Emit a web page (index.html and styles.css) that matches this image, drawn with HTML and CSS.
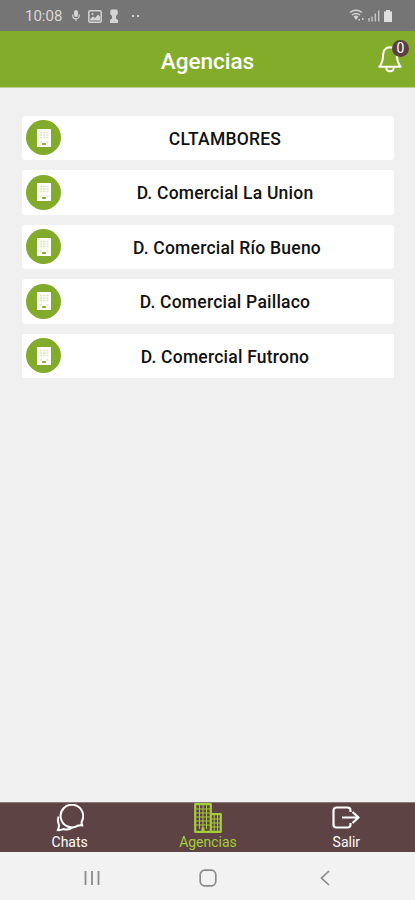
FILE: index.html
```html
<!DOCTYPE html>
<html lang="es">
<head>
  <meta charset="UTF-8">
  <meta name="viewport" content="width=device-width, initial-scale=1.0">
  <title>Agencias</title>
  <link rel="stylesheet" href="styles.css">
</head>
<body>
  <!-- Building icon shared by the list rows -->
  <svg class="defs" width="0" height="0">
    <symbol id="building" viewBox="0 0 14 18">
      <path d="M0 0h14v18H0z" fill="#fff"/>
      <path d="M2.500 3.500h2.500M6 3.500h2.500M9.500 3.500h2M2.500 6h2.500M6 6h2.500M9.500 6h2M2.500 8.500h2.500M6 8.500h2.500M9.500 8.500h2M2.500 13h2.500M9.500 13h2" stroke="#dbe8bf" stroke-width="1.300"/>
      <path d="M5.200 14h3.600v2H5.200z" fill="#82ab2b"/>
    </symbol>
  </svg>

  <div class="status-bar">
    <span class="time">10:08</span>
    <svg class="mic" width="8" height="12" viewBox="0 0 8 12">
      <rect x="2" y="0" width="4" height="7" rx="2" fill="#d4d4d4"/>
      <path d="M.7 4.500v1a3.300 3.300 0 0 0 6.600 0v-1M4 8.800V11" fill="none" stroke="#d4d4d4" stroke-width="1.200"/>
    </svg>
    <svg class="picture" width="14" height="13" viewBox="0 0 14 13">
      <rect x=".8" y=".8" width="12.400" height="11.400" rx="1.500" fill="none" stroke="#d4d4d4" stroke-width="1.500"/>
      <path d="M2 10.500V9l3-2.500 2 1.500 3-3.500 2 2v4z" fill="#d4d4d4"/>
      <circle cx="4.500" cy="4" r="1" fill="#d4d4d4"/>
    </svg>
    <svg class="pawn" width="10" height="14" viewBox="0 0 10 14">
      <path d="M2 .5h6l.8 2v2.500L7 7v2.500l2 1.500v3H1v-3l2-1.500V7L1.200 5V2.500z" fill="#d4d4d4"/>
    </svg>
    <span class="dots"><i></i><i></i></span>
    <svg class="signals" width="44" height="14" viewBox="0 0 44 14">
      <path d="M1 3.500Q7 -1 13 3.500M3 6q4-3 8 0" fill="none" stroke="#d4d4d4" stroke-width="1.400"/>
      <path d="M4.500 7.500Q7 5.500 9.500 7.500L7 11zM9.500 10h1.500v1.500H9.500zM13 9h1.500v2H13z" fill="#d4d4d4"/>
      <path d="M20 9v3.500M23 7.500v5M26.300 4.500v8M29.700 1.500v11" stroke="#c4c4c4" stroke-width="1.500"/>
      <path d="M37 1h4v1.500h2V13h-8V2.500h2z" fill="#dedede"/>
    </svg>
  </div>

  <header class="header">
    <h1>Agencias</h1>
    <div class="bell">
      <svg width="24" height="29" viewBox="0 0 24 29">
        <path d="M12 2.200c-4.500 0-6.900 3.200-6.900 7.500 0 5.300-.6 8.300-3.900 12.100h21.600c-3.300-3.800-3.900-6.800-3.900-12.100 0-4.300-2.400-7.500-6.900-7.500z" fill="none" stroke="#fff" stroke-width="2" stroke-linejoin="round"/>
        <path d="M8.300 22.500c0 5 7.400 5 7.400 0" fill="none" stroke="#fff" stroke-width="2"/>
      </svg>
      <span class="badge">0</span>
    </div>
  </header>

  <main class="list">
    <div class="card">
      <span class="avatar"><svg width="14" height="18"><use href="#building"/></svg></span>
      <span class="name">CLTAMBORES</span>
    </div>
    <div class="card">
      <span class="avatar"><svg width="14" height="18"><use href="#building"/></svg></span>
      <span class="name">D. Comercial La Union</span>
    </div>
    <div class="card">
      <span class="avatar"><svg width="14" height="18"><use href="#building"/></svg></span>
      <span class="name long">D. Comercial Río Bueno</span>
    </div>
    <div class="card">
      <span class="avatar"><svg width="14" height="18"><use href="#building"/></svg></span>
      <span class="name">D. Comercial Paillaco</span>
    </div>
    <div class="card">
      <span class="avatar"><svg width="14" height="18"><use href="#building"/></svg></span>
      <span class="name">D. Comercial Futrono</span>
    </div>
  </main>

  <nav class="tabs">
    <div class="tab">
      <svg width="28" height="28" viewBox="0 0 28 28" fill="none" stroke="#fff" stroke-width="2" stroke-linejoin="round">
        <path d="M26.500 21.500c-.8-1-1.200-2.700-.6-4.300A11.300 11.300 0 1 0 21.500 21.800c1.600-.6 3.200-.6 5-.3z"/>
        <path d="M2.600 12.500c-1.200 3-.8 5.500.2 7.800.4 1.700 0 3.700-1 6 2 0 3.800-.2 5.700-1.300 3 1 6.500.7 9-1.700"/>
      </svg>
      <span>Chats</span>
    </div>
    <div class="tab active">
      <svg width="28" height="30" viewBox="0 0 28 30">
        <path d="M1.200 1.200h15.600v27.600H1.200zM16.800 11.200h10v17.600h-10z" fill="none" stroke="#a5cc3b" stroke-width="2.200" stroke-linejoin="round"/>
        <path d="M5.500 2v24M9 2v24M12.500 2v24M20.200 12v16M23.500 12v16" stroke="#a5cc3b" stroke-width="1"/>
        <path d="M2 6h14M2 10h14M2 14h14M2 18h14M2 22h14M17 16h9M17 20h9M17 24h9" stroke="#a5cc3b" stroke-width="1"/>
        <path d="M7.500 24.500h3V29h-3z" fill="#a5cc3b"/>
      </svg>
      <span>Agencias</span>
    </div>
    <div class="tab">
      <svg width="28" height="24" viewBox="0 0 28 24" fill="none" stroke="#fff" stroke-width="2.200">
        <path d="M18.500 6V4.500a3 3 0 0 0-3-3h-11a3 3 0 0 0-3 3v14a3 3 0 0 0 3 3h11a3 3 0 0 0 3-3V17"/>
        <path d="M10 11.500h16M20.500 6l6 5.500-6 5.500"/>
      </svg>
      <span>Salir</span>
    </div>
  </nav>

  <div class="system-nav">
    <svg width="16" height="16" viewBox="0 0 16 16">
      <path d="M1.500 1v14M8 1v14M14.500 1v14" stroke="#8a8a8a" stroke-width="1.800"/>
    </svg>
    <svg class="home" width="18" height="18" viewBox="0 0 18 18">
      <rect x="1.200" y="1.200" width="15.600" height="15.600" rx="4.500" fill="none" stroke="#8a8a8a" stroke-width="1.700"/>
    </svg>
    <svg width="10" height="16" viewBox="0 0 10 16">
      <path d="M9 1L1.500 8 9 15" fill="none" stroke="#8a8a8a" stroke-width="1.700"/>
    </svg>
  </div>
</body>
</html>
```

FILE: styles.css
```css
* {
  box-sizing: border-box;
}
body {
  margin: 0;
  height: 100vh;
  display: flex;
  flex-direction: column;
  background: #f0f0f0;
  font-family: Roboto, sans-serif;
  overflow: hidden;
}
svg {
  display: block;
  flex: none;
}
.defs {
  position: absolute;
}
.status-bar {
  height: 31px;
  flex: none;
  display: flex;
  align-items: center;
  padding: 1px 22px 0 25px;
  background: #757575;
  color: #d8d8d8;
}
.time {
  width: 38px;
  font-size: 15px;
  line-height: 18px;
}
.mic {
  margin-left: 9px;
}
.picture {
  margin-left: 8px;
}
.pawn {
  margin-left: 7px;
}
.dots {
  display: flex;
  gap: 3px;
  margin-left: 13px;
}
.dots i {
  width: 2px;
  height: 2px;
  background: #d4d4d4;
}
.signals {
  margin-left: auto;
}
.header {
  height: 57px;
  flex: none;
  position: relative;
  display: flex;
  align-items: center;
  justify-content: center;
  padding-top: 3px;
  background: #84ac2b;
  border-bottom: 1px solid #bdcf94;
}
.header h1 {
  margin: 0;
  font-size: 22.5px;
  font-weight: 500;
  color: #fff;
}
.bell {
  position: absolute;
  top: 14px;
  right: 13px;
}
.badge {
  position: absolute;
  top: -5px;
  right: -7px;
  width: 17px;
  height: 17px;
  border-radius: 50%;
  background: #5a4043;
  color: #fff;
  font-size: 14px;
  line-height: 17px;
  text-align: center;
}
.list {
  flex: 1;
  display: flex;
  flex-direction: column;
  gap: 10px;
  padding: 27.5px 21px 0 22px;
}
.card {
  height: 44.5px;
  display: flex;
  align-items: center;
  padding: 0 5px 0 4px;
  background: #fff;
  border-radius: 3px;
}
.avatar {
  width: 35px;
  height: 35px;
  flex: none;
  display: flex;
  align-items: center;
  justify-content: center;
  border-radius: 50%;
  background: #82ab2b;
}
.name {
  flex: 1;
  padding-top: 2px;
  font-size: 17.5px;
  font-weight: 500;
  letter-spacing: 0.22px;
  text-align: center;
  color: #111;
}
.long {
  padding-left: 4px;
}
.tabs {
  height: 50px;
  flex: none;
  display: grid;
  grid-template-columns: repeat(3, 1fr);
  background: #5d4343;
  border-top: 1px solid #8b7a7a;
}
.tab {
  display: flex;
  flex-direction: column;
  align-items: center;
  justify-content: flex-end;
  padding: 0 0 3px 1px;
  color: #fff;
  font-size: 14px;
  line-height: 16px;
}
.tab svg {
  margin-bottom: 2px;
}
.tab:last-child svg {
  margin-bottom: 4px;
}
.active {
  color: #a5cc3b;
}
.active svg {
  margin-bottom: 1px;
}
.system-nav {
  height: 48px;
  flex: none;
  display: flex;
  align-items: center;
  justify-content: space-between;
  padding: 3px 85px 0 84px;
  background: #f2f2f2;
}
.home {
  margin-right: 4px;
}
```
